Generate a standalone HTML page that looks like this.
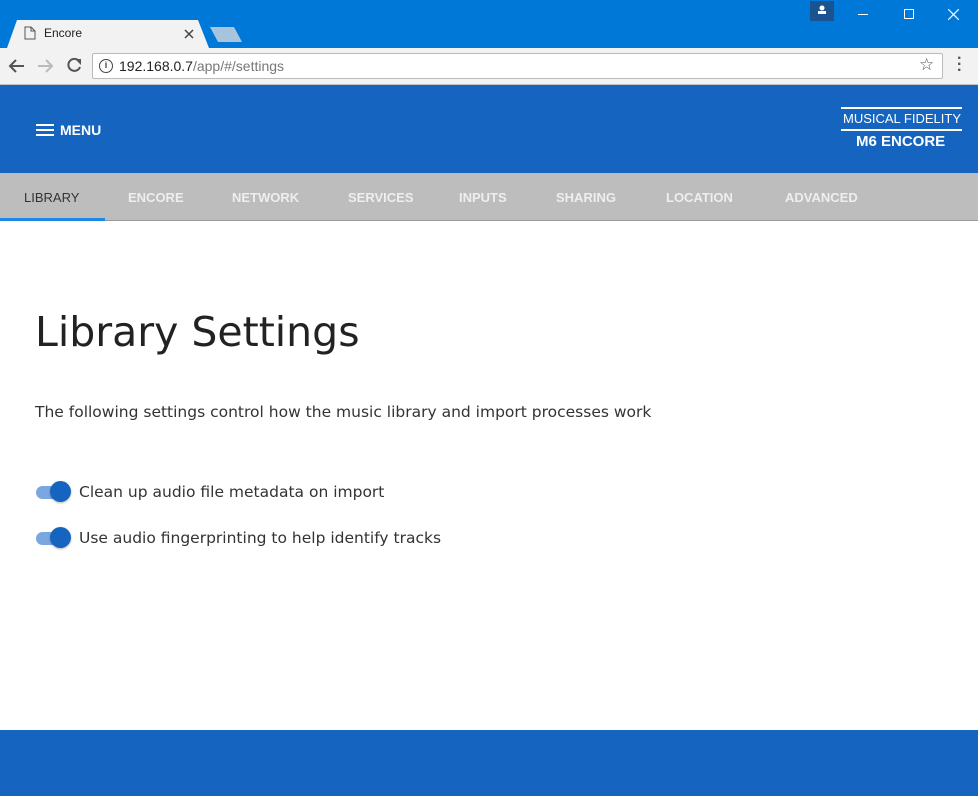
<!DOCTYPE html>
<html><head><style>
*{margin:0;padding:0;box-sizing:border-box}
body{width:978px;height:796px;overflow:hidden;font-family:"Liberation Sans",sans-serif;background:#fff;position:relative}
.abs{position:absolute}
.t{font-family:"DejaVu Sans",sans-serif}
</style></head><body>
<div class="abs" style="left:0;top:0;width:978px;height:48px;background:#0078d7"></div>
<svg class="abs" style="left:0;top:18px" width="260" height="30"><path d="M7 30 L17 2 L198 2 L209 30 Z" fill="#f2f2f2"/><path d="M210 9 L234 9 L242 24 L218 24 Z" fill="#a8c4dc"/></svg>
<svg class="abs" style="left:24px;top:26px" width="12" height="14"><path d="M1 1H7L11 5V13H1Z M7 1V5H11" fill="none" stroke="#555" stroke-width="1"/></svg>
<div class="abs" style="left:44px;top:26px;font-size:12px;color:#222">Encore</div>
<svg class="abs" style="left:184px;top:29px" width="10" height="10"><path d="M1 1L9 9M9 1L1 9" stroke="#444" stroke-width="1.5"/></svg>
<div class="abs" style="left:810px;top:1px;width:24px;height:20px;background:#1a5390"></div>
<svg class="abs" style="left:816px;top:4px" width="12" height="12"><circle cx="6" cy="4" r="2.5" fill="#fff"/><rect x="2" y="7" width="8" height="3" fill="#fff"/></svg>
<div class="abs" style="left:858px;top:14px;width:10px;height:1px;background:#fff"></div>
<div class="abs" style="left:904px;top:9px;width:10px;height:10px;border:1px solid #fff"></div>
<svg class="abs" style="left:948px;top:9px" width="11" height="11"><path d="M0 0L11 11M11 0L0 11" stroke="#fff" stroke-width="1.2"/></svg>
<div class="abs" style="left:0;top:48px;width:978px;height:37px;background:#f2f2f2;border-bottom:1px solid #ccc"></div>
<svg class="abs" style="left:8px;top:58px" width="80" height="16"><path d="M16 8H2M8 2L2 8L8 14" fill="none" stroke="#555" stroke-width="2"/><path d="M30 8H44M38 2L44 8L38 14" fill="none" stroke="#bbb" stroke-width="2"/><path d="M71 3A6 6 0 1 0 72 9" fill="none" stroke="#555" stroke-width="2"/><path d="M67 1H73V7Z" fill="#555"/></svg>
<div class="abs" style="left:92px;top:53px;width:851px;height:26px;background:#fff;border:1px solid #bbb;border-radius:2px"></div>
<div class="abs" style="left:99px;top:59px;width:14px;height:14px;border:1.5px solid #444;border-radius:50%;font-size:9px;text-align:center;line-height:11px;font-weight:bold;color:#444">i</div>
<div class="abs" style="left:119px;top:58px;font-size:14px;color:#222">192.168.0.7<span style="color:#777">/app/#/settings</span></div>
<div class="abs" style="left:919px;top:55px;font-size:17px;color:#555">☆</div>
<div class="abs" style="left:957px;top:56px;font-size:16px;color:#555;font-weight:bold;line-height:6px">·<br>·<br>·</div>
<div class="abs" style="left:0;top:85px;width:978px;height:88px;background:#1565c0;box-shadow:0 2px 4px rgba(0,0,0,.3)"></div>
<div class="abs" style="left:36px;top:124px;width:18px;height:2px;background:#fff;box-shadow:0 5px 0 #fff,0 10px 0 #fff"></div>
<div class="abs" style="left:60px;top:122px;font-size:14px;color:#fff;font-weight:bold">MENU</div>
<div class="abs" style="left:841px;top:107px;width:121px;height:2px;background:#fff"></div>
<div class="abs" style="left:843px;top:111px;font-size:13px;color:#fff">MUSICAL FIDELITY</div>
<div class="abs" style="left:841px;top:129px;width:121px;height:2px;background:#fff"></div>
<div class="abs" style="left:856px;top:133px;font-size:15px;color:#fff;font-weight:bold">M6 ENCORE</div>
<div class="abs" style="left:0;top:173px;width:978px;height:48px;background:#bdbdbd;border-bottom:1px solid #999"></div>
<div class="abs" style="left:0;top:218px;width:105px;height:3px;background:#1e88e5"></div>
<div class="abs" style="top:190px;left:0;width:978px;font-size:13px;font-weight:bold;color:#eee">
<span class="abs" style="left:24px;color:#333;font-weight:normal">LIBRARY</span>
<span class="abs" style="left:128px">ENCORE</span>
<span class="abs" style="left:232px">NETWORK</span>
<span class="abs" style="left:348px">SERVICES</span>
<span class="abs" style="left:459px">INPUTS</span>
<span class="abs" style="left:556px">SHARING</span>
<span class="abs" style="left:666px">LOCATION</span>
<span class="abs" style="left:785px">ADVANCED</span></div>
<div class="abs t" style="left:35px;top:308px;font-size:41px;color:#222">Library Settings</div>
<div class="abs t" style="left:35px;top:403px;font-size:15.5px;color:#333">The following settings control how the music library and import processes work</div>
<div class="abs" style="left:36px;top:486px;width:32px;height:13px;border-radius:7px;background:#7ba7e0"></div>
<div class="abs" style="left:50px;top:481px;width:21px;height:21px;border-radius:50%;background:#1565c0;box-shadow:0 1px 2px rgba(0,0,0,.3)"></div>
<div class="abs t" style="left:79px;top:483px;font-size:15.5px;color:#333">Clean up audio file metadata on import</div>
<div class="abs" style="left:36px;top:532px;width:32px;height:13px;border-radius:7px;background:#7ba7e0"></div>
<div class="abs" style="left:50px;top:527px;width:21px;height:21px;border-radius:50%;background:#1565c0;box-shadow:0 1px 2px rgba(0,0,0,.3)"></div>
<div class="abs t" style="left:79px;top:529px;font-size:15.5px;color:#333">Use audio fingerprinting to help identify tracks</div>
<div class="abs" style="left:0;top:730px;width:978px;height:66px;background:#1565c0"></div>
</body></html>
